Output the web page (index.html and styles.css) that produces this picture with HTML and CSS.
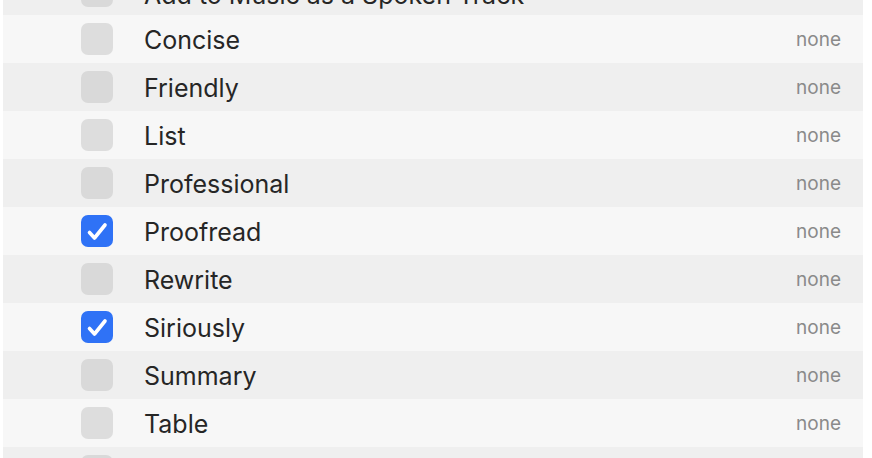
FILE: index.html
```html
<!DOCTYPE html>
<html>
<head>
<meta charset="utf-8">
<link rel="stylesheet" href="styles.css">
</head>
<body>
<div class="list">
  <div class="row alt first"><span class="box"></span><span class="name">Add to Music as a Spoken Track</span><span class="val">none</span></div>
  <div class="row"><span class="box"></span><span class="name">Concise</span><span class="val">none</span></div>
  <div class="row alt"><span class="box"></span><span class="name">Friendly</span><span class="val">none</span></div>
  <div class="row"><span class="box"></span><span class="name">List</span><span class="val">none</span></div>
  <div class="row alt"><span class="box"></span><span class="name">Professional</span><span class="val">none</span></div>
  <div class="row"><span class="box checked"><svg viewBox="0 0 32 32" width="32" height="32"><path d="M8.5 17.5 L13.5 23 L24 10" fill="none" stroke="#fff" stroke-width="3.6" stroke-linecap="round" stroke-linejoin="round"/></svg></span><span class="name">Proofread</span><span class="val">none</span></div>
  <div class="row alt"><span class="box"></span><span class="name">Rewrite</span><span class="val">none</span></div>
  <div class="row"><span class="box checked"><svg viewBox="0 0 32 32" width="32" height="32"><path d="M8.5 17.5 L13.5 23 L24 10" fill="none" stroke="#fff" stroke-width="3.6" stroke-linecap="round" stroke-linejoin="round"/></svg></span><span class="name">Siriously</span><span class="val">none</span></div>
  <div class="row alt"><span class="box"></span><span class="name">Summary</span><span class="val">none</span></div>
  <div class="row"><span class="box"></span><span class="name">Table</span><span class="val">none</span></div>
  <div class="row alt"><span class="box"></span><span class="name">Text</span><span class="val">none</span></div>
</div>
</body>
</html>
```
FILE: styles.css
```css
html, body {
  margin: 0;
  padding: 0;
  background: #ffffff;
  overflow: hidden;
}
body {
  font-family: Inter, "Noto Sans", sans-serif;
  color: #262626;
}
.list {
  margin-top: -33px;
  margin-left: 3px;
  width: 860px;
}
.row {
  display: flex;
  align-items: center;
  height: 48px;
  background: #f7f7f7;
}
.row.alt {
  background: #efefef;
}
.box {
  flex: none;
  width: 32px;
  height: 32px;
  margin-left: 78px;
  border-radius: 7px;
  background: #dddddd;
  display: flex;
}
.row.alt .box {
  background: #d9d9d9;
}
.box.checked {
  background: #2f72f6;
}
.name {
  margin-left: 31px;
  padding-top: 2px;
  font-size: 25px;
  flex: 1;
  white-space: nowrap;
}
.row.first .name {
  padding-top: 8px;
}
.val {
  font-size: 19px;
  color: #8a8a8a;
  padding-right: 22px;
  padding-top: 1px;
}
.row.first .val {
  padding-top: 0;
  padding-bottom: 4px;
}
```
